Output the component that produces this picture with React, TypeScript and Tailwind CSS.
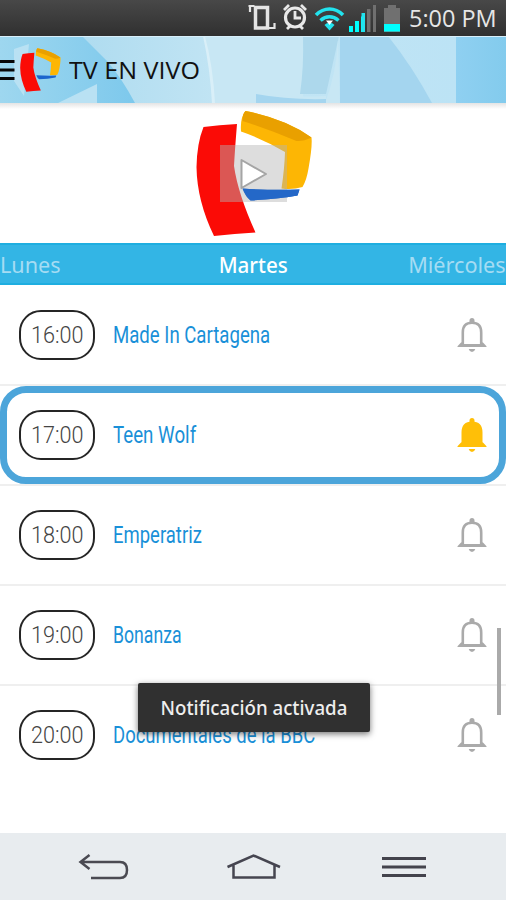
import clsx from 'clsx';

interface Show {
  time: string;
  title: string;
  active?: boolean;
  stretch: string;
}

const shows: Show[] = [
  { time: '16:00', title: 'Made In Cartagena', stretch: 'scale-x-[0.775]' },
  { time: '17:00', title: 'Teen Wolf', active: true, stretch: 'scale-x-[0.78]' },
  { time: '18:00', title: 'Emperatriz', stretch: 'scale-x-[0.77]' },
  { time: '19:00', title: 'Bonanza', stretch: 'scale-x-[0.735]' },
  { time: '20:00', title: 'Documentales de la BBC', stretch: 'scale-x-[0.77]' },
];

function StatusBar() {
  return (
    <div className="flex h-9 shrink-0 items-center justify-end bg-linear-to-b from-[#484848] to-[#303030] pr-[9px]">
      <svg className="h-9 w-[154px]" viewBox="248 0 154 36" fill="none">
        <path d="M255.500 7.500h12v20.500h-12z" stroke="#e4e4e4" strokeWidth="3.500" />
        <path d="M248.500 6h6M250 5v7M269 28h6.500M274.500 29v-6" stroke="#e4e4e4" strokeWidth="2.200" />
        <circle cx="295" cy="17.500" r="9.500" stroke="#e8e8e8" strokeWidth="3.200" />
        <path d="M295 11v7h6M284 10l5-5M306 10l-5-5M287 29l4-4M303 29l-4-4" stroke="#e8e8e8" strokeWidth="2.800" />
        <path d="M316 15c8-8 19-8 27 0M320.500 20.500c5.500-5 12.500-5 18 0" stroke="#22e3ee" strokeWidth="3.600" />
        <path d="M324.500 25c3-3 7-3 10 0l-5 5.500z" fill="#22e3ee" />
        <path d="M326 20.500h7l-3.500 4.500z" fill="#fff" />
        <path d="M349 26h4v6h-4zM355 21h4v11h-4zM361 16.500h4V32h-4z" fill="#0ff" />
        <path d="M361.500 13h3.500v19h-3.500z" fill="#22e3ee" />
        <path d="M367 9h3.500v23H367zM373 5h3v27h-3z" fill="#707070" />
        <path d="M384 8h4V5h8v3h4v24h-16z" fill="#707070" />
        <path d="M384 24h16v7.500h-16z" fill="#0ff" />
      </svg>
      <span className="ml-[7px] w-[88px] whitespace-nowrap font-['Open_Sans',sans-serif] text-[23px] font-medium leading-9 text-[#e6e6e6]">
        <span className="inline-block origin-left scale-x-[1.02]">5:00 PM</span>
      </span>
    </div>
  );
}

function Logo({ className }: { className: string }) {
  return (
    <svg className={className} viewBox="196 110 117 127" preserveAspectRatio="none">
      <path d="M203.500 127Q219 125 237 124q-2 24-3 42 4 28 21.500 66.500-21 1-41.500 3.500-17-35-17.500-69 .5-24 7-40z" fill="#fb0b06" />
      <path d="M245.500 111q40 8 66 26.500 1 9-3 31-2 12-6 18.500-10 3-21 1.500 3-20 3.500-36.500-22-13-44-20.500-1-14 4.500-20.500z" fill="#fdb604" />
      <path d="M245.500 111q40 8 66 26.500-8 4-15 3.500-28-12-54-20 0-8 3-10z" fill="#e9a000" />
      <path d="M242.500 188.500q29 2 57 1l-2 6q-22 4-47 5-5-4-8-12z" fill="#1b65ce" />
    </svg>
  );
}

function Header() {
  return (
    <header className="relative h-[67px] shrink-0">
      <svg className="absolute inset-0 h-full w-full" viewBox="0 36 506 67" preserveAspectRatio="none">
        <defs>
          <linearGradient id="sky">
            <stop offset="0" stopColor="#9ed7ef" />
            <stop offset="1" stopColor="#7cc8ec" />
          </linearGradient>
          <linearGradient id="pale">
            <stop offset="0" stopColor="#afdcf0" />
            <stop offset="0.4" stopColor="#c3e5f4" />
            <stop offset="1" stopColor="#bce3f5" />
          </linearGradient>
          <linearGradient id="edge">
            <stop offset="0" stopColor="#8fd0f1" />
            <stop offset="1" stopColor="#83cbed" />
          </linearGradient>
        </defs>
        <path d="M0 36h140v67H0z" fill="url(#sky)" />
        <path d="M82 36h374v67H135Q121 77 107 61z" fill="url(#pale)" />
        <path d="M205 36h98v67h-90q-1-36-8-67z" fill="#c8e7f4" />
        <path d="M203 36h2q8 30 10 67h-3q-2-35-9-67z" fill="#d9eff8" />
        <path d="M58 103l39-19v19zM14 49l15-5-5 52-10-15z" fill="#b9e1f3" />
        <path d="M303 36h36l-13 58h-26q4-27 3-58z" fill="#add8ec" />
        <path d="M338 40l2 63h-15q11-28 13-63zM255 93q35 5 71 3v4h-71z" fill="#c8e7f4" />
        <path d="M340 36h48q24 30 44 67h-92z" fill="#a4d5ef" />
        <path d="M256 94q32 6 70 5v4h-70z" fill="#a4d5ef" />
        <path d="M456 36h50v67h-50z" fill="url(#edge)" />
        <path d="M0 36.500h506" stroke="#d8effa" />
      </svg>
      <div className="relative flex h-full items-center">
        <svg className="h-6 w-[15px]" viewBox="0 0 15 24">
          <path d="M0 3.500h14.500M0 12h14.500M0 20.500h14.500" stroke="#080808" strokeWidth="3.200" />
        </svg>
        <Logo className="ml-[5px] h-[44px] w-[41px]" />
        <h1 className="ml-[8px] whitespace-nowrap pt-px font-['Open_Sans',sans-serif] text-[24px] leading-none text-[#111]">
          <span className="inline-block origin-left scale-x-[1.045]">TV EN VIVO</span>
        </h1>
      </div>
    </header>
  );
}

function BellIcon({ active }: { active?: boolean }) {
  return (
    <svg className="h-[36px] w-[30px]" viewBox="0 0 30 36">
      <path
        d="M5.800 27.500V15.500Q5.800 5.800 15 5.800t9.200 9.700v12"
        fill={active ? '#ffbf08' : 'none'}
        stroke={active ? '#ffbf08' : '#aaa'}
        strokeWidth="2.600"
      />
      <path
        d="M12.500 5.500V3.500Q12.500 1 15 1t2.500 2.500v2zM4.500 25l1 2h19l1-2 4 4.200v.8H.5v-.8zM11.700 32h6.600q-.8 2.900-3.300 2.900T11.700 32z"
        fill={active ? '#ffbf08' : '#aaa'}
      />
    </svg>
  );
}

function ShowRow({ show }: { show: Show }) {
  return (
    <div className="flex h-[100px] shrink-0 items-start border-b-2 border-[#efefef] last:border-transparent">
      <div
        className={clsx(
          'flex h-[98px] w-full items-center',
          show.active
            ? 'rounded-[26px] border-[7px] border-[#4ca5da] pl-3 pr-[12px]'
            : 'pl-[19px] pr-[19px]'
        )}
      >
        <div className="flex h-[50px] w-[76px] shrink-0 items-center justify-center rounded-[22px] border-2 border-[#252525]">
          <span className="inline-block scale-x-[0.9] whitespace-nowrap font-[Roboto,sans-serif] text-[24px] font-light leading-none text-[#444]">
            {show.time}
          </span>
        </div>
        <div className="ml-[18px] min-w-0 flex-1 pt-[2px]">
          <span
            className={clsx(
              'inline-block origin-left whitespace-nowrap font-[Roboto,sans-serif] text-[24px] leading-none text-[#1990d8]',
              show.stretch
            )}
          >
            {show.title}
          </span>
        </div>
        <BellIcon active={show.active} />
      </div>
    </div>
  );
}

function NavBar() {
  return (
    <nav className="flex h-[67px] shrink-0 items-center justify-between bg-[#e8ecef] pl-[78px] pr-[79px]">
      <svg className="h-[30px] w-[52px]" viewBox="78 852 52 30" fill="none" stroke="#4a4a52" strokeWidth="2.500">
        <path d="M89.500 855l-9 7 9 7M81 862h39q7 0 7 8t-7 8H91" />
      </svg>
      <svg className="-ml-[4px] h-[30px] w-[54px]" viewBox="227 852 54 30" fill="none" stroke="#454550" strokeWidth="2.500">
        <path d="M227.500 867l26-11.500 26.500 11.500M233.500 865v12.500h41V865" />
      </svg>
      <svg className="h-[30px] w-[45px]" viewBox="382 852 45 30" stroke="#43434c" strokeWidth="2.800">
        <path d="M382 858.500h44M382 867h44M382 875.500h44" />
      </svg>
    </nav>
  );
}

export default function App() {
  return (
    <div className="relative flex h-[900px] w-[506px] flex-col overflow-hidden bg-white">
      <StatusBar />
      <Header />
      <section className="relative flex h-[140px] shrink-0 items-start justify-center bg-linear-to-b from-[#e4e4e4] via-white via-[6px] to-white pl-[3px] pt-[7px]">
        <Logo className="h-[127px] w-[117px]" />
        <button className="absolute left-[220px] top-[42px] h-[57px] w-[67px] bg-[#b4b4b4]/45" aria-label="Reproducir">
          <svg className="h-full w-full overflow-visible" viewBox="0 0 67 57">
            <path d="M22.500 43.500q29 2 57 1l-2 6q-22 4-47 5-5-4-8-12z" fill="#2468c8" />
            <path d="M21.500 15v28L46 29z" fill="#fff" stroke="#a5a5a5" strokeWidth="2" strokeLinejoin="round" />
          </svg>
        </button>
      </section>
      <div className="flex h-[42px] shrink-0 items-center justify-between border-y-2 border-[#1eaee0] bg-[#33b5e5] pt-[4px] font-['Noto_Sans',sans-serif] text-[21px] text-[#a5dcf3]">
        <span className="origin-left scale-x-[1.03] whitespace-nowrap">Lunes</span>
        <span className="ml-[37px] scale-x-[0.98] whitespace-nowrap font-medium text-white">Martes</span>
        <span className="origin-right scale-x-[1.03] whitespace-nowrap">Miércoles</span>
      </div>
      <main className="flex h-[548px] shrink-0 flex-col pt-px">
        {shows.map((show) => (
          <ShowRow key={show.time} show={show} />
        ))}
      </main>
      <NavBar />
      <div className="absolute left-[497px] top-[628px] h-[87px] w-1 bg-[#aaa]" />
      <div className="absolute left-[138px] top-[683px] flex h-[49px] w-[232px] items-center justify-center rounded-[2px] bg-[#303030] shadow-[0_2px_6px_rgba(0,0,0,0.55)]">
        <span className="scale-x-[0.935] whitespace-nowrap font-['Noto_Sans',sans-serif] text-[20px] font-medium text-[#eee]">
          Notificación activada
        </span>
      </div>
    </div>
  );
}
